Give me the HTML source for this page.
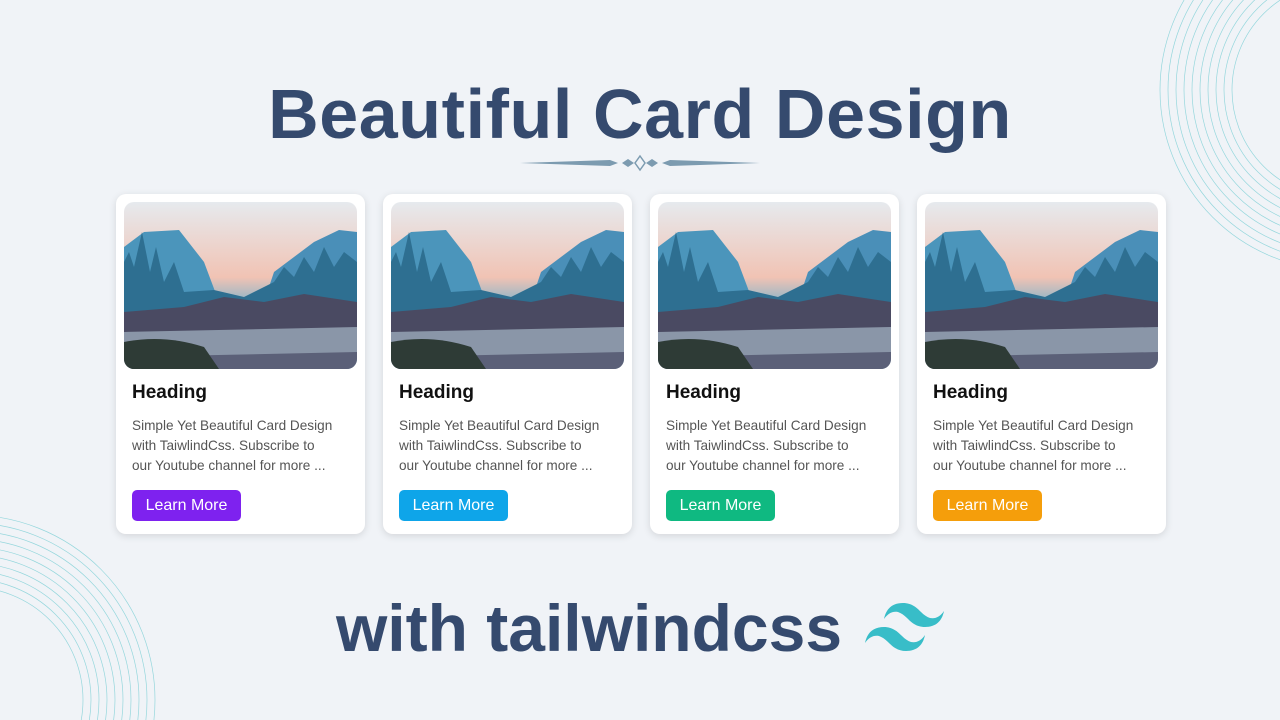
<!DOCTYPE html>
<html><head><style>
html,body{margin:0;width:1280px;height:720px;overflow:hidden}
body{background:#f0f3f7;position:relative;font-family:"Liberation Sans",sans-serif}
.t{position:absolute;left:0;width:1280px;text-align:center;color:#354a6e;font-weight:bold}
.card{position:absolute;top:194px;width:249px;height:340px;background:#fff;border-radius:10px;box-shadow:0 2px 8px rgba(0,0,0,.12)}
.img{position:absolute;left:8px;top:8px;width:233px;height:167px;border-radius:10px;overflow:hidden}
.h{position:absolute;left:16px;top:188px;font-size:19px;font-weight:bold;color:#111}
.p{position:absolute;left:16px;top:222px;width:222px;font-size:13.6px;line-height:20px;color:#555;white-space:nowrap}
.b{position:absolute;left:16px;top:296px;width:109px;height:31px;border-radius:5px;color:#fff;font-size:16px;line-height:31px;text-align:center}
</style></head><body>
<svg width="1280" height="720" style="position:absolute;left:0;top:0">
<g fill="none" stroke="#7fd0d6" stroke-width="0.7" opacity=".8">
<circle cx="1340" cy="90" r="180"/><circle cx="1340" cy="90" r="172"/><circle cx="1340" cy="90" r="164"/><circle cx="1340" cy="90" r="156"/><circle cx="1340" cy="90" r="148"/><circle cx="1340" cy="90" r="140"/><circle cx="1340" cy="90" r="132"/><circle cx="1340" cy="90" r="124"/><circle cx="1340" cy="90" r="116"/><circle cx="1340" cy="90" r="108"/>
<circle cx="-30" cy="700" r="185"/><circle cx="-30" cy="700" r="177"/><circle cx="-30" cy="700" r="169"/><circle cx="-30" cy="700" r="161"/><circle cx="-30" cy="700" r="153"/><circle cx="-30" cy="700" r="145"/><circle cx="-30" cy="700" r="137"/><circle cx="-30" cy="700" r="129"/><circle cx="-30" cy="700" r="121"/><circle cx="-30" cy="700" r="113"/>
</g>
<g fill="#7c9bb0">
<polygon points="520,163 610,160 618,163 610,166"/>
<polygon points="760,163 670,160 662,163 670,166"/>
<polygon points="622,163 628,159 634,163 628,167"/><polygon points="646,163 652,159 658,163 652,167"/>
<polygon points="640,156 645,163 640,170 635,163" fill="none" stroke="#7c9bb0" stroke-width="1.5"/>
</g>
<g transform="translate(865,603)" fill="#38bdc8">
<path d="M38 0C27 0 21 6 19 16c4-6 9-8 14-7 3 1 6 3 9 6 4 4 9 9 18 9 11 0 17-6 19-16-4 6-9 8-14 7-3-1-6-3-9-6-4-4-9-9-18-9zM19 24C8 24 2 30 0 40c4-6 9-8 14-7 3 1 6 3 9 6 4 4 9 9 18 9 11 0 17-6 19-16-4 6-9 8-14 7-3-1-6-3-9-6-4-4-9-9-18-9z"/>
</g>
</svg>
<div class="t" style="top:74px;font-size:70px;letter-spacing:0.6px">Beautiful Card Design</div>
<div class="t" style="top:590px;font-size:66px;left:-51px">with tailwindcss</div>
<svg width="0" height="0" style="position:absolute;left:0;top:0"><defs>
<linearGradient id="sky" x1="0" y1="0" x2="0" y2="1"><stop offset="0" stop-color="#e6eaee"/><stop offset=".45" stop-color="#f1c3b4"/><stop offset=".6" stop-color="#8fb6c8"/></linearGradient>
<g id="scene">
<rect width="233" height="167" fill="url(#sky)"/>
<path d="M0 45 L20 30 L55 28 L80 60 L95 100 L0 110Z" fill="#4b95bb"/>
<path d="M233 30 L215 28 L190 40 L150 70 L140 100 L233 110Z" fill="#4a8fb8"/>
<path d="M0 60 L5 50 L10 65 L18 30 L26 70 L32 45 L40 80 L50 60 L60 90 L90 88 L120 95 L150 80 L160 65 L170 75 L180 55 L190 70 L200 45 L210 65 L220 50 L233 60 L233 120 L0 125Z" fill="#2e6f91"/>
<path d="M0 110 L60 105 L100 95 L140 100 L180 92 L233 100 L233 135 L0 135Z" fill="#4a4a62"/>
<path d="M0 130 L233 125 L233 155 L0 155Z" fill="#8a96a8"/>
<path d="M0 155 L233 150 L233 167 L0 167Z" fill="#5b6078"/>
<path d="M0 140 Q40 132 80 145 L95 167 L0 167Z" fill="#2e3b36"/>
</g></defs></svg>
<div class="card" style="left:116px"><svg class="img"><use href="#scene"/></svg><div class="h">Heading</div><div class="p">Simple Yet Beautiful Card Design<br>with TaiwlindCss. Subscribe to<br>our Youtube channel for more ...</div><div class="b" style="background:#7e22ef">Learn More</div></div>
<div class="card" style="left:383px"><svg class="img"><use href="#scene"/></svg><div class="h">Heading</div><div class="p">Simple Yet Beautiful Card Design<br>with TaiwlindCss. Subscribe to<br>our Youtube channel for more ...</div><div class="b" style="background:#0ea5e9">Learn More</div></div>
<div class="card" style="left:650px"><svg class="img"><use href="#scene"/></svg><div class="h">Heading</div><div class="p">Simple Yet Beautiful Card Design<br>with TaiwlindCss. Subscribe to<br>our Youtube channel for more ...</div><div class="b" style="background:#0fb981">Learn More</div></div>
<div class="card" style="left:917px"><svg class="img"><use href="#scene"/></svg><div class="h">Heading</div><div class="p">Simple Yet Beautiful Card Design<br>with TaiwlindCss. Subscribe to<br>our Youtube channel for more ...</div><div class="b" style="background:#f59e0b">Learn More</div></div>
</body></html>
